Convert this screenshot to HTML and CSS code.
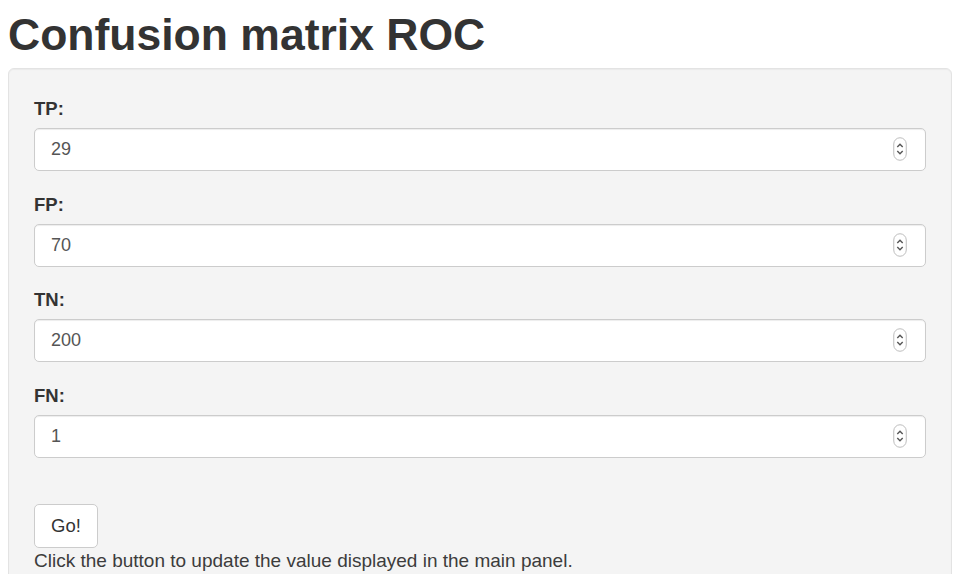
FILE: index.html
```html
<!DOCTYPE html>
<html lang="en">

<head>
  <meta charset="UTF-8">
  <meta name="viewport" content="width=device-width, initial-scale=1.0">
  <title>Confusion matrix ROC</title>
  <link rel="stylesheet" href="styles.css">
</head>

<body>
  <h2 class="title">Confusion matrix ROC</h2>
  <div class="well">
    <div class="group">
      <label for="tp">TP:</label>
      <div class="field">
        <input id="tp" type="text" value="29">
        <svg class="spin" width="14" height="24" viewBox="0 0 14 24"><rect x="0.75" y="0.75" width="12.5" height="22.5" rx="6.25" fill="#fff" stroke="#bdbdbd" stroke-width="1"/><path d="M4.3 10 L7 7.3 L9.7 10" fill="none" stroke="#555" stroke-width="1.4"/><path d="M4.3 14 L7 16.7 L9.7 14" fill="none" stroke="#555" stroke-width="1.4"/></svg>
      </div>
    </div>
    <div class="group">
      <label for="fp">FP:</label>
      <div class="field">
        <input id="fp" type="text" value="70">
        <svg class="spin" width="14" height="24" viewBox="0 0 14 24"><rect x="0.75" y="0.75" width="12.5" height="22.5" rx="6.25" fill="#fff" stroke="#bdbdbd" stroke-width="1"/><path d="M4.3 10 L7 7.3 L9.7 10" fill="none" stroke="#555" stroke-width="1.4"/><path d="M4.3 14 L7 16.7 L9.7 14" fill="none" stroke="#555" stroke-width="1.4"/></svg>
      </div>
    </div>
    <div class="group">
      <label for="tn">TN:</label>
      <div class="field">
        <input id="tn" type="text" value="200">
        <svg class="spin" width="14" height="24" viewBox="0 0 14 24"><rect x="0.75" y="0.75" width="12.5" height="22.5" rx="6.25" fill="#fff" stroke="#bdbdbd" stroke-width="1"/><path d="M4.3 10 L7 7.3 L9.7 10" fill="none" stroke="#555" stroke-width="1.4"/><path d="M4.3 14 L7 16.7 L9.7 14" fill="none" stroke="#555" stroke-width="1.4"/></svg>
      </div>
    </div>
    <div class="group">
      <label for="fn">FN:</label>
      <div class="field">
        <input id="fn" type="text" value="1">
        <svg class="spin" width="14" height="24" viewBox="0 0 14 24"><rect x="0.75" y="0.75" width="12.5" height="22.5" rx="6.25" fill="#fff" stroke="#bdbdbd" stroke-width="1"/><path d="M4.3 10 L7 7.3 L9.7 10" fill="none" stroke="#555" stroke-width="1.4"/><path d="M4.3 14 L7 16.7 L9.7 14" fill="none" stroke="#555" stroke-width="1.4"/></svg>
      </div>
    </div>
    <button class="go" type="button">Go!</button>
    <p class="help">Click the button to update the value displayed in the main panel.</p>
  </div>
</body>

</html>
```

FILE: styles.css
```css
body {
  margin: 0;
  padding: 11px 2px 0 8px;
  font-family: "Liberation Sans", Arial, sans-serif;
  color: #333;
  background: #fff;
}

.title {
  margin: 0 0 9px 0;
  font-size: 44.5px;
  line-height: 48px;
  font-weight: 700;
  color: #333;
}

.well {
  background: #f4f4f4;
  border: 1px solid #e3e3e3;
  border-radius: 6px;
  padding: 27px 25px 40px 25px;
  box-shadow: inset 0 1px 1px rgba(0, 0, 0, 0.04);
}

.group {
  display: flex;
  flex-direction: column;
  margin-bottom: 20.5px;
}

.group label {
  font-size: 18.5px;
  font-weight: 700;
  line-height: 26px;
  margin-bottom: 6px;
  color: #333;
}

.field {
  position: relative;
}

.field input {
  display: block;
  width: 100%;
  box-sizing: border-box;
  height: 43px;
  padding: 0 16px;
  font-family: "Liberation Sans", Arial, sans-serif;
  font-size: 18px;
  color: #555;
  background: #fff;
  border: 1px solid #ccc;
  border-radius: 5px;
  box-shadow: inset 0 1px 1px rgba(0, 0, 0, 0.075);
  outline: none;
}

.spin {
  position: absolute;
  right: 19px;
  top: 9px;
}

.go {
  display: block;
  margin-top: 46px;
  width: 64px;
  height: 44px;
  padding: 0;
  font-family: "Liberation Sans", Arial, sans-serif;
  font-size: 18.5px;
  color: #333;
  background: #fff;
  border: 1px solid #ccc;
  border-radius: 5px;
}

.help {
  margin: 1px 0 0 0;
  font-size: 19px;
  line-height: 24px;
  color: #3c3c3c;
}
```
